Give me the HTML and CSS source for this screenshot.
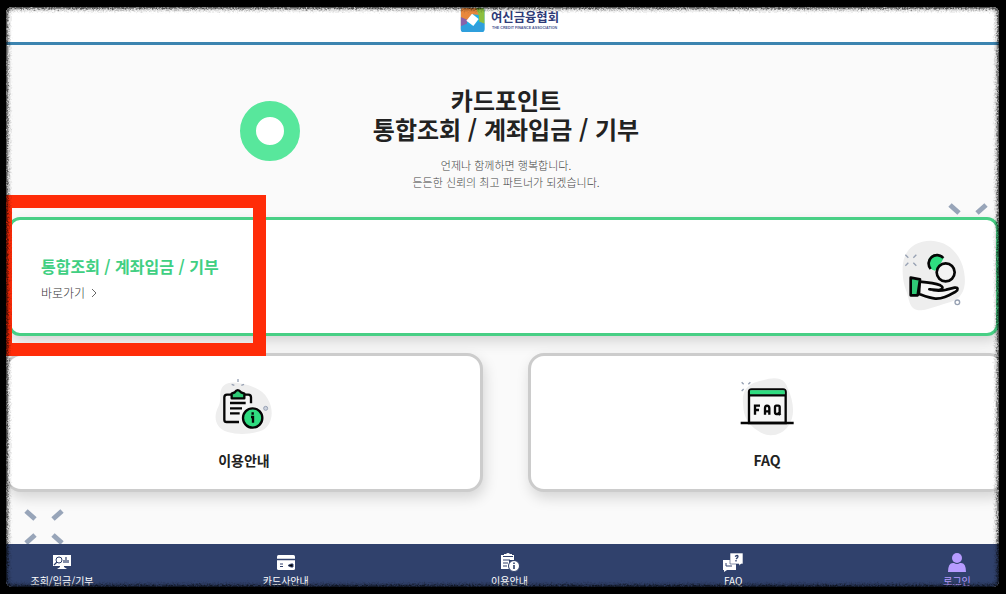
FILE: index.html
```html
<!DOCTYPE html>
<html lang="ko">

<head>
    <meta charset="UTF-8">
    <meta name="viewport" content="width=device-width, initial-scale=1">
    <title>카드포인트 통합조회</title>
    <link rel="stylesheet" href="styles.css">
</head>

<body>
    <div class="frame">
        <header class="header">
            <a href="#" class="logo" aria-label="여신금융협회">
                <svg width="102" height="26" viewBox="300 18 306 78">
                    <defs>
                        <clipPath id="logoClip"><rect x="302" y="20" width="72" height="73" rx="10"/></clipPath>
                    </defs>
                    <g clip-path="url(#logoClip)">
                        <rect x="302" y="20" width="72" height="73" fill="#1fb0e6"/>
                        <path d="M302 20h52l6 22-24-2-14 20-6 12-14 2z" fill="#e8883c"/>
                        <path d="M302 48l20 8-2 22-18 15z" fill="#8a62a8"/>
                        <path d="M348 20h26v50l-16-8-2-20z" fill="#8cbf3f"/>
                        <path d="M302 93V76l18-8 16 8 22-14 16 6v25z" fill="#2f9fdc"/>
                    </g>
                    <path d="M336 38l20 16-16 21-21-16z" fill="#fff"/>
                    <text class="logo-name" x="393" y="62">여신금융협회</text>
                    <text class="logo-sub" x="396" y="84">THE CREDIT FINANCE ASSOCIATION</text>
                </svg>
            </a>
        </header>

        <main class="main">
            <section class="intro">
                <span class="ring"></span>
                <h1 class="title">카드포인트<br>통합조회 / 계좌입금 / 기부</h1>
                <p class="text">언제나 함께하면 행복합니다.<br>든든한 신뢰의 최고 파트너가 되겠습니다.</p>
            </section>

            <section class="cards">
                <svg class="spark spark-top" width="40" height="38" viewBox="0 0 40 38">
                    <path d="M2 3l9 8M38 3l-9 8M2 35l9-8M38 35l-9-8"/>
                </svg>
                <a href="#" class="card card-main">
                    <div class="card-text">
                        <h2 class="card-title">통합조회 / 계좌입금 / 기부</h2>
                        <span class="go">바로가기
                            <svg width="6" height="10" viewBox="0 0 6 10"><path d="M1 1l4 4-4 4" fill="none" stroke="#666"/></svg>
                        </span>
                    </div>
                    <svg width="65" height="72" viewBox="185 180 195 216">
                        <path d="M190 262C192 208 228 182 274 182c54 2 82 36 96 76 14 50 8 94-36 108-38 10-56 20-88 25-38 2-34-30-46-60-8-22-11-44-10-69z" fill="#eee"/>
                        <path d="M198 224l9 9M231 224l-9 9M198 257l9-9M231 257l-9-9" stroke="#97a1b3" stroke-width="4"/>
                        <path d="M279 269a25 25 0 1 1 34-34l-14 24-12 13z" fill="#2fdc80"/>
                        <path d="M274 267a25 25 0 1 1 38-33" fill="none" stroke="#050505" stroke-width="8"/>
                        <circle cx="319" cy="277" r="27" fill="#f3f3f3" stroke="#050505" stroke-width="8"/>
                        <path d="M241 305c25 2 50 6 62 11 10 5 8 13-5 14l-28-2c20 6 37 5 51 1l25-6c11-1 11 7 3 12-24 13-40 22-61 21-15-1-30-7-49-14z" fill="#f5f5f5" stroke="#050505" stroke-width="8" stroke-linejoin="round"/>
                        <path d="M214 293l28 5-7 48h-21z" fill="#2fca76" stroke="#050505" stroke-width="8" stroke-linejoin="round"/>
                        <circle cx="354" cy="367" r="7" fill="none" stroke="#97a1b3" stroke-width="4"/>
                    </svg>
                </a>
                <div class="row">
                    <a href="#" class="card card-sub">
                        <svg width="60" height="60" viewBox="105 80 180 180">
                            <path d="M124 130c2-28 24-38 58-31 44 8 70 22 84 46 22 36 14 86-24 98-32 10-68 10-96 2-38-12-44-46-28-76 6-12 6-24 6-39z" fill="#eee"/>
                            <path d="M177 86v9M158 102l8 3M195 102l-8 3" stroke="#97a1b3" stroke-width="4"/>
                            <path d="M180 215h-37q-7 0-7-7v-67q0-8 8-8h64q8 0 8 8v18" fill="#f5f5f5" stroke="#050505" stroke-width="7"/>
                            <path d="M158 144v-14l9-4q9-13 19 0l10 4v14z" fill="#2fca76" stroke="#050505" stroke-width="7" stroke-linejoin="round"/>
                            <path d="M153 158h47M153 174h36M153 189h29" stroke="#050505" stroke-width="7"/>
                            <circle cx="221" cy="203" r="36" fill="#f3f3f3"/>
                            <circle cx="221" cy="203" r="29" fill="#2fdc80" stroke="#050505" stroke-width="7"/>
                            <path d="M221 186v7M216 200h6v17" fill="none" stroke="#050505" stroke-width="7"/>
                            <circle cx="260" cy="174" r="6" fill="#ccd2de" stroke="#97a1b3" stroke-width="3"/>
                        </svg>
                        <span class="card-label">이용안내</span>
                    </a>
                    <a href="#" class="card card-sub">
                        <svg width="60" height="60" viewBox="110 80 180 180">
                            <path d="M128 160c-4-48 22-62 60-70 36-12 66-8 74 24 18 38 24 84 2 112-18 30-62 38-90 16-32-22-44-40-46-82z" fill="#eee"/>
                            <path d="M124 96l6 6M150 96l-6 6M124 122l6-6" stroke="#97a1b3" stroke-width="4"/>
                            <path d="M146 218v-93q0-8 8-8h94q8 0 8 8v93z" fill="#f7f7f7" stroke="#050505" stroke-width="7"/>
                            <path d="M149 120h104v13H149z" fill="#2fdc80"/>
                            <path d="M145 135h112M121 218h159" stroke="#050505" stroke-width="7"/>
                            <path d="M164 193v-27h15M164 179h12M194 193v-19q0-8 6-8 7 0 7 8v19M194 183h13M226 166h8q4 0 4 5v15q0 5-4 5h-6q-4 0-4-5v-15q0-5 4-5M234 185l6 9" fill="none" stroke="#050505" stroke-width="7"/>
                        </svg>
                        <span class="card-label">FAQ</span>
                    </a>
                </div>
                <div class="mark"></div>
            </section>

            <svg class="spark spark-bottom" width="40" height="38" viewBox="0 0 40 38">
                <path d="M2 3l9 8M38 3l-9 8M2 35l9-8M38 35l-9-8"/>
            </svg>
        </main>

        <nav class="nav">
            <a href="#" class="nav-item">
                <svg width="20" height="20" viewBox="0 0 20 20">
                    <path d="M1 3h18v11h-7v1l3 2H5l3-2v-1H1z" fill="#fff"/>
                    <circle cx="7" cy="8" r="3" fill="none" stroke="#30416c" stroke-width="1"/>
                    <path d="M5 10l-3 3M12 11V8M14 11V5M16 11V8" stroke="#30416c" stroke-width="1.2"/>
                </svg>
                <span>조회/입금/기부</span>
            </a>
            <a href="#" class="nav-item">
                <svg width="20" height="20" viewBox="0 0 20 20">
                    <rect x="1" y="3" width="18" height="15" rx="1.5" fill="#fff"/>
                    <path d="M1 7.500h18" stroke="#30416c" stroke-width="1.500"/>
                    <path d="M4 12h3M4 14.500h3M12 13.500l3-1.500h2v3h-2z" stroke="#30416c" stroke-width="1"/>
                </svg>
                <span>카드사안내</span>
            </a>
            <a href="#" class="nav-item">
                <svg width="20" height="20" viewBox="0 0 20 20">
                    <path d="M1 3h3V2h2q2-2 4 0h2v1h2v5H9v9H1z" fill="#fff"/>
                    <path d="M3 4.500h10M3 8h7M3 11h5M3 14h4" stroke="#30416c" stroke-width="1"/>
                    <circle cx="14" cy="14" r="5.500" fill="#fff" stroke="#30416c"/>
                    <path d="M14 10.500v1.500M14 13v4" stroke="#30416c" stroke-width="1.600"/>
                </svg>
                <span>이용안내</span>
            </a>
            <a href="#" class="nav-item">
                <svg width="20" height="20" viewBox="0 0 20 20">
                    <path d="M0 8h13v10H4l-3 2v-2H0z" fill="#fff"/>
                    <path d="M3 11v3h6" fill="none" stroke="#30416c"/>
                    <path d="M7 1h13v11h-2l-2 2v-2H7z" fill="#fff" stroke="#30416c" stroke-width=".6"/>
                    <path d="M12 4.500q3-2 3 0 0 1-2 2.500M13 8v1.500" fill="none" stroke="#30416c" stroke-width="1.300"/>
                </svg>
                <span>FAQ</span>
            </a>
            <a href="#" class="nav-item login">
                <svg width="20" height="20" viewBox="0 0 20 20">
                    <circle cx="10" cy="6" r="5" fill="#b79cff"/>
                    <path d="M1 20q0-10 6-9 3 2 6 0 6-1 6 9z" fill="#b79cff"/>
                </svg>
                <span>로그인</span>
            </a>
        </nav>

        <!-- torn edge -->
        <svg class="edge" width="100%" height="100%">
            <filter id="rough" x="-5%" y="-5%" width="110%" height="110%">
                <feTurbulence type="fractalNoise" baseFrequency="0.6" numOctaves="2" seed="4" result="noise"/>
                <feGaussianBlur in="SourceGraphic" stdDeviation="1" result="soft"/>
                <feDisplacementMap in="soft" in2="noise" scale="5" xChannelSelector="R" yChannelSelector="G"/>
            </filter>
            <g filter="url(#rough)" fill="none">
                <rect width="100%" height="100%" rx="8" stroke="#000" stroke-opacity=".2" stroke-width="8"/>
                <rect width="100%" height="100%" rx="6" stroke="#000" stroke-width="2"/>
            </g>
        </svg>
    </div>
</body>

</html>
```
FILE: styles.css
```css
* {
    margin: 0;
    padding: 0;
    box-sizing: border-box;
}

body {
    background-color: #000;
    padding: 7px 7px 7px 6px;
    font-family: "Noto Sans CJK KR", sans-serif;
    color: #222;
}

a {
    color: inherit;
    text-decoration: none;
}

svg {
    display: block;
    flex-shrink: 0;
}

.frame {
    position: relative;
    display: flex;
    flex-direction: column;
    min-height: calc(100vh - 14px);
    background-color: #fafafa;
    border-radius: 6px;
    overflow: hidden;
}

.header {
    display: flex;
    justify-content: center;
    padding-bottom: 9px;
    background-color: #fff;
    border-bottom: 3px solid #3c84b0;
}

.logo {
    padding-left: 16px;
}

.logo-name {
    font-size: 37px;
    font-weight: 700;
    fill: #2f3b78;
}

.logo-sub {
    font-family: "Liberation Sans", sans-serif;
    font-size: 11px;
    font-weight: 700;
    fill: #4a5590;
}

.main {
    position: relative;
    flex: 1;
    padding-top: 40px;
    overflow: hidden;
}

.intro {
    position: relative;
    padding: 0 0 26px 7px;
    text-align: center;
}

.ring {
    position: absolute;
    top: 16px;
    left: calc(50% - 263px);
    width: 60px;
    height: 60px;
    border: 16px solid #58e79c;
    border-radius: 50%;
    background-color: #fff;
}

.title {
    font-size: 24px;
    font-weight: 700;
    line-height: 29px;
}

.text {
    margin-top: 14px;
    font-size: 11px;
    font-weight: 300;
    line-height: 17px;
    color: #444;
}

.cards {
    position: relative;
    padding-left: 2px;
}

.card {
    position: relative;
    display: flex;
    align-items: center;
    background-color: #fff;
    border: 3px solid #ccc;
    border-radius: 16px;
    box-shadow: 2px 6px 14px rgba(0, 0, 0, 0.15);
}

.card-main {
    justify-content: space-between;
    padding: 20px 30px 21px;
    border-color: #48cf85;
    border-radius: 12px;
}

.card-text {
    padding-top: 5px;
}

.card-title {
    font-size: 16px;
    font-weight: 700;
    line-height: 24px;
    color: #40cf82;
}

.go {
    display: flex;
    align-items: center;
    gap: 6px;
    margin-top: 5px;
    font-size: 12px;
    font-weight: 300;
    line-height: 20px;
    color: #333;
}

.row {
    display: grid;
    grid-template-columns: 1fr 1fr;
    gap: 45px;
    margin: 17px -7px 0 -3px;
}

.card-sub {
    flex-direction: column;
    gap: 13px;
    padding: 21px 0 19px;
}

.card-label {
    font-size: 14px;
    font-weight: 700;
    line-height: 20px;
}

/* red highlight */
.mark {
    position: absolute;
    top: -22px;
    left: -7px;
    width: 267px;
    height: 161px;
    border: 13px solid #ff2c08;
}

.spark {
    position: absolute;
    fill: none;
    stroke: #98a5b9;
    stroke-width: 5px;
}

.spark-top {
    top: -15px;
    right: 11px;
}

.spark-bottom {
    left: 18px;
    bottom: -2px;
}

.nav {
    display: flex;
    justify-content: space-between;
    height: 43px;
    padding: 8px 2px 0 16px;
    background-color: #30416c;
    color: #fff;
}

.nav-item {
    display: flex;
    flex-direction: column;
    align-items: center;
    width: 80px;
    font-size: 10px;
    line-height: 18px;
}

.login {
    color: #b79cff;
}

.edge {
    position: absolute;
    top: 0;
    left: 0;
    pointer-events: none;
}
```
